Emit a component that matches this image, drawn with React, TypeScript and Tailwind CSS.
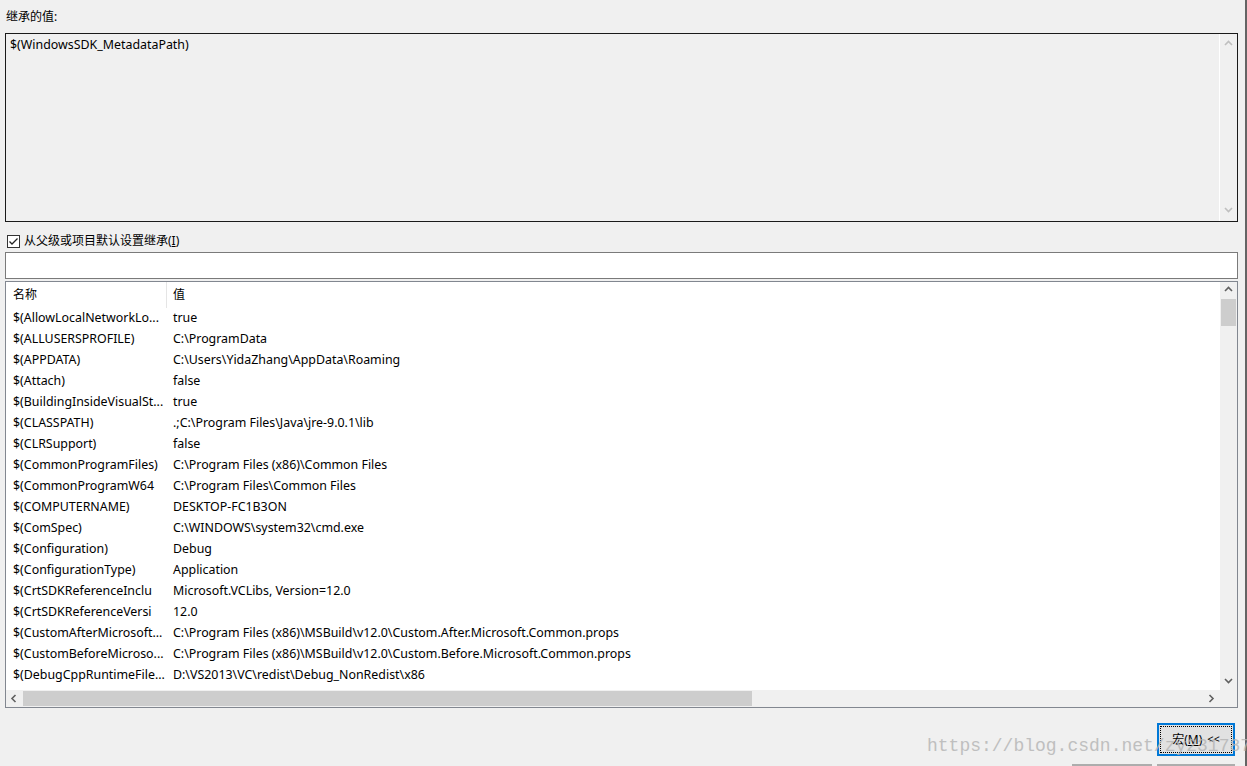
const rows: [string, string][] = [
  ["$(AllowLocalNetworkLo...", "true"],
  ["$(ALLUSERSPROFILE)", "C:\\ProgramData"],
  ["$(APPDATA)", "C:\\Users\\YidaZhang\\AppData\\Roaming"],
  ["$(Attach)", "false"],
  ["$(BuildingInsideVisualSt...", "true"],
  ["$(CLASSPATH)", ".;C:\\Program Files\\Java\\jre-9.0.1\\lib"],
  ["$(CLRSupport)", "false"],
  ["$(CommonProgramFiles)", "C:\\Program Files (x86)\\Common Files"],
  ["$(CommonProgramW64", "C:\\Program Files\\Common Files"],
  ["$(COMPUTERNAME)", "DESKTOP-FC1B3ON"],
  ["$(ComSpec)", "C:\\WINDOWS\\system32\\cmd.exe"],
  ["$(Configuration)", "Debug"],
  ["$(ConfigurationType)", "Application"],
  ["$(CrtSDKReferenceInclu", "Microsoft.VCLibs, Version=12.0"],
  ["$(CrtSDKReferenceVersi", "12.0"],
  ["$(CustomAfterMicrosoft...", "C:\\Program Files (x86)\\MSBuild\\v12.0\\Custom.After.Microsoft.Common.props"],
  ["$(CustomBeforeMicroso...", "C:\\Program Files (x86)\\MSBuild\\v12.0\\Custom.Before.Microsoft.Common.props"],
  ["$(DebugCppRuntimeFile...", "D:\\VS2013\\VC\\redist\\Debug_NonRedist\\x86"],
];

function Chevron({ dir, color }: { dir: "up" | "down" | "left" | "right"; color: string }) {
  const d = {
    up: "M1 5 L4.5 1.5 L8 5",
    down: "M1 2 L4.5 5.5 L8 2",
    left: "M5.5 1 L2 4.5 L5.5 8",
    right: "M2.5 1 L6 4.5 L2.5 8",
  }[dir];
  return (
    <svg width="9" height="9" viewBox="0 0 9 9" className="block">
      <path d={d} fill="none" stroke={color} strokeWidth="1.6" />
    </svg>
  );
}

export default function App() {
  return (
    <div
      className="relative flex h-[766px] w-[1247px] overflow-hidden bg-[#f0f0f0] text-[12.4px] text-black"
      style={{ fontFamily: '"Noto Sans", "Noto Sans CJK SC", sans-serif' }}
    >
      <div className="w-[1245px] pl-[5px] pt-[9px]">
        <div className="pl-px text-[12px] leading-[16px]">继承的值:</div>

        {/* inherited values box */}
        <div className="mt-[8px] flex h-[189px] w-[1233px] border border-[#1a1a1a]">
          <div className="flex-1 px-[4px] pt-[2px] leading-[18px]">$(WindowsSDK_MetadataPath)</div>
          <div className="flex w-[18px] flex-col items-center justify-between border-l border-white py-[6px]">
            <Chevron dir="up" color="#bfbfbf" />
            <Chevron dir="down" color="#bfbfbf" />
          </div>
        </div>

        {/* checkbox */}
        <div className="mt-[11px] flex h-[16px] items-center gap-[4px] pl-[2px]">
          <div className="flex h-[13px] w-[13px] items-center justify-center border border-[#333] bg-white">
            <svg width="11" height="11" viewBox="0 0 11 11" className="block">
              <path d="M1.5 5.5 L4 8 L9.5 2.5" fill="none" stroke="#222" strokeWidth="1.3" />
            </svg>
          </div>
          <span className="text-[12px] leading-[16px]">
            从父级或项目默认设置继承(<span className="underline">I</span>)
          </span>
        </div>

        {/* filter input */}
        <div className="mt-[3px] h-[27px] w-[1233px] border border-[#7a7a7a] bg-white" />

        {/* macro list */}
        <div className="mt-[2px] flex h-[427px] w-[1233px] flex-col border border-[#828790] bg-white">
          <div className="flex min-h-0 flex-1">
            <div className="flex-1 overflow-hidden">
              <div className="flex h-[26px] items-center">
                <div className="flex h-full w-[161px] items-center border-r border-[#e5e5e5] pl-[7px] text-[12px]">名称</div>
                <div className="pl-[6px] text-[12px]">值</div>
              </div>
              {rows.map(([name, value]) => (
                <div key={name} className="flex h-[21px] items-center whitespace-nowrap">
                  <div className="w-[161px] pl-[7px]">{name}</div>
                  <div className="pl-[6px]">{value}</div>
                </div>
              ))}
            </div>
            <div className="flex w-[17px] flex-col items-center bg-[#f0f0f0]">
              <div className="flex h-[17px] items-center justify-center">
                <Chevron dir="up" color="#606060" />
              </div>
              <div className="h-[27px] w-[15px] bg-[#cdcdcd]" />
              <div className="flex-1" />
              <div className="flex h-[17px] items-center justify-center">
                <Chevron dir="down" color="#606060" />
              </div>
            </div>
          </div>
          <div className="flex h-[17px] bg-[#f0f0f0]">
            <div className="flex w-[17px] items-center justify-center">
              <Chevron dir="left" color="#606060" />
            </div>
            <div className="flex flex-1 items-center">
              <div className="h-[15px] w-[729px] bg-[#cdcdcd]" />
            </div>
            <div className="flex w-[17px] items-center justify-center">
              <Chevron dir="right" color="#606060" />
            </div>
            <div className="w-[17px]" />
          </div>
        </div>

        {/* buttons */}
        <div className="mt-[15px] flex justify-end pr-[10px]">
          <div className="flex h-[33px] w-[78px] items-center justify-center border-2 border-[#0078d7] bg-[#e1e1e1] p-px">
            <div className="flex h-full w-full items-center justify-center gap-[5px] whitespace-nowrap border border-dotted border-black text-[12px]">
              <span>
                宏(<span className="underline">M</span>)
              </span>
              <span className="text-[11px]">&lt;&lt;</span>
            </div>
          </div>
        </div>
        <div className="mt-[8px] flex justify-end gap-[5px] pr-[10px]">
          <div className="h-[2px] w-[80px] bg-[#adadad]" />
          <div className="h-[2px] w-[78px] bg-[#adadad]" />
        </div>
      </div>
      <div className="w-[2px] bg-[#646464]" />

      <div
        className="pointer-events-none absolute left-[927px] top-[735px] text-[18px] leading-[22px] text-[#b4b4b4] opacity-80"
        style={{ fontFamily: '"Liberation Mono", monospace' }}
      >
        https://blog.csdn.net/zy2317878
      </div>
    </div>
  );
}
